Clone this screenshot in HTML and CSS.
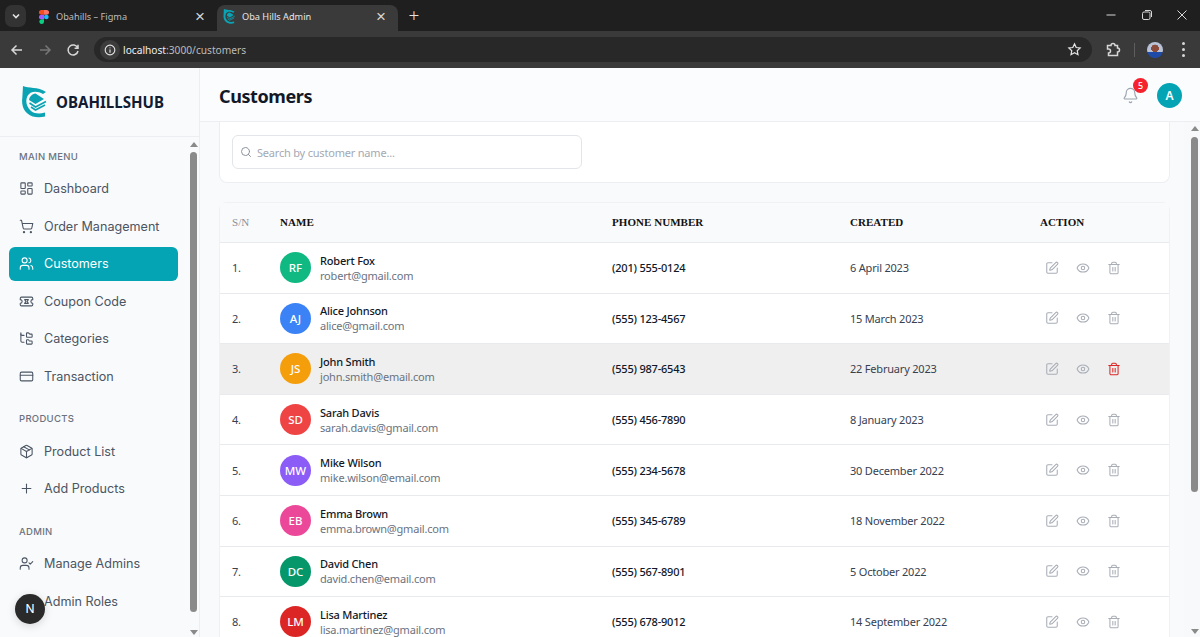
FILE: index.html
```html
<!DOCTYPE html>
<html lang="en">
<head>
<meta charset="utf-8">
<title>Oba Hills Admin</title>
<link rel="stylesheet" href="styles.css">
</head>
<body>
<svg class="defs" width="0" height="0" aria-hidden="true">
  <symbol id="i-dash" viewBox="0 0 24 24"><rect x="3" y="3" width="7" height="9" rx="1"/><rect x="14" y="3" width="7" height="5" rx="1"/><rect x="14" y="12" width="7" height="9" rx="1"/><rect x="3" y="16" width="7" height="5" rx="1"/></symbol>
  <symbol id="i-cart" viewBox="0 0 24 24"><circle cx="8" cy="21" r="1"/><circle cx="19" cy="21" r="1"/><path d="M2.05 2.05h2l2.66 12.42a2 2 0 0 0 2 1.58h9.78a2 2 0 0 0 1.95-1.57l1.65-7.43H5.12"/></symbol>
  <symbol id="i-users" viewBox="0 0 24 24"><path d="M16 21v-2a4 4 0 0 0-4-4H6a4 4 0 0 0-4 4v2"/><circle cx="9" cy="7" r="4"/><path d="M22 21v-2a4 4 0 0 0-3-3.87"/><path d="M16 3.13a4 4 0 0 1 0 7.75"/></symbol>
  <symbol id="i-ticket" viewBox="0 0 24 24"><path d="M2 9a3 3 0 0 1 0 6v2a2 2 0 0 0 2 2h16a2 2 0 0 0 2-2v-2a3 3 0 0 1 0-6V7a2 2 0 0 0-2-2H4a2 2 0 0 0-2 2Z"/><path d="M9 9h6l-2 3 2 3H9l2-3Z"/></symbol>
  <symbol id="i-tree" viewBox="0 0 24 24"><path d="M20 10a1 1 0 0 0 1-1V6a1 1 0 0 0-1-1h-2.5a1 1 0 0 1-.8-.4l-.9-1.2A1 1 0 0 0 15 3h-2a1 1 0 0 0-1 1v5a1 1 0 0 0 1 1Z"/><path d="M20 21a1 1 0 0 0 1-1v-3a1 1 0 0 0-1-1h-2.9a1 1 0 0 1-.88-.55l-.42-.85a1 1 0 0 0-.92-.6H13a1 1 0 0 0-1 1v5a1 1 0 0 0 1 1Z"/><path d="M3 5a2 2 0 0 0 2 2h3"/><path d="M3 3v13a2 2 0 0 0 2 2h3"/></symbol>
  <symbol id="i-card" viewBox="0 0 24 24"><rect x="2" y="5" width="20" height="14" rx="2"/><path d="M2 10h20"/></symbol>
  <symbol id="i-box" viewBox="0 0 24 24"><path d="M11 21.73a2 2 0 0 0 2 0l7-4A2 2 0 0 0 21 16V8a2 2 0 0 0-1-1.73l-7-4a2 2 0 0 0-2 0l-7 4A2 2 0 0 0 3 8v8a2 2 0 0 0 1 1.73z"/><path d="M12 22V12"/><path d="M3.29 7 12 12l8.71-5"/><path d="m7.5 4.27 9 5.15"/></symbol>
  <symbol id="i-plus" viewBox="0 0 24 24"><path d="M5 12h14"/><path d="M12 5v14"/></symbol>
  <symbol id="i-ucheck" viewBox="0 0 24 24"><path d="M16 21v-2a4 4 0 0 0-4-4H6a4 4 0 0 0-4 4v2"/><circle cx="9" cy="7" r="4"/><path d="m16 11 2 2 4-4"/></symbol>
  <symbol id="i-edit" viewBox="0 0 24 24"><path d="M12 3H5a2 2 0 0 0-2 2v14a2 2 0 0 0 2 2h14a2 2 0 0 0 2-2v-7"/><path d="M18.375 2.625a1 1 0 0 1 3 3l-9.013 9.014a2 2 0 0 1-.853.505l-2.873.84a.5.5 0 0 1-.62-.62l.84-2.873a2 2 0 0 1 .506-.852z"/></symbol>
  <symbol id="i-eye" viewBox="0 0 24 24"><path d="M2.062 12.348a1 1 0 0 1 0-.696 10.75 10.75 0 0 1 19.876 0 1 1 0 0 1 0 .696 10.75 10.75 0 0 1-19.876 0"/><circle cx="12" cy="12" r="3"/></symbol>
  <symbol id="i-trash" viewBox="0 0 24 24"><path d="M3 6h18"/><path d="M19 6v14c0 1-1 2-2 2H7c-1 0-2-1-2-2V6"/><path d="M8 6V4c0-1 1-2 2-2h4c1 0 2 1 2 2v2"/><path d="M10 11v6"/><path d="M14 11v6"/></symbol>
  <symbol id="i-bell" viewBox="0 0 24 24"><path d="M10.268 21a2 2 0 0 0 3.464 0"/><path d="M3.262 15.326A1 1 0 0 0 4 17h16a1 1 0 0 0 .74-1.673C19.41 13.956 18 12.499 18 8A6 6 0 0 0 6 8c0 4.499-1.411 5.956-2.738 7.326"/></symbol>
  <symbol id="i-search" viewBox="0 0 24 24"><path d="m21 21-4.34-4.34"/><circle cx="11" cy="11" r="8"/></symbol>
  <symbol id="i-logo" viewBox="0 0 26 32"><path class="logo-fill" d="M1 0C6 2.500 16 .5 24 6l-3 2C15 4.500 8 5 5.500 10 3 15 4.500 21 9 25c4 3 9 3 14 1.500v4C17 32 10 31.500 5.500 27.500 1 24-.5 18 .3 12Z"/><path class="logo-fill" d="M13.500 7.500 22 13l-8.500 5L7 14c.5-3.500 3-6 6.500-6.500Z"/><path class="logo-line" d="M7.500 17l6 4L24 15.500M9 21l4.500 3L23 19"/></symbol>
</svg>

<header class="browser">
  <div class="tabstrip">
    <span class="tab-menu"><svg viewBox="0 0 10 10" class="chev"><path d="M2 3.500 5 6.500 8 3.500"/></svg></span>
    <div class="tab">
      <svg class="fav" viewBox="0 0 12 18"><path fill="#f24e1e" d="M2.500 0H6v6H2.500a3 3 0 0 1 0-6Z"/><path fill="#ff7262" d="M6 0h3.500a3 3 0 0 1 0 6H6Z"/><path fill="#a259ff" d="M2.500 6H6v6H2.500a3 3 0 0 1 0-6Z"/><circle fill="#1abcfe" cx="9" cy="9" r="3"/><path fill="#0acf83" d="M2.500 12H6v3a3 3 0 1 1-3.500-3Z"/></svg>
      <span class="tab-title">Obahills – Figma</span>
      <span class="tab-x">×</span>
    </div>
    <div class="tab tab-active">
      <svg class="fav fav-logo"><use href="#i-logo"/></svg>
      <span class="tab-title">Oba Hills Admin</span>
      <span class="tab-x">×</span>
    </div>
    <span class="tab-new">+</span>
    <div class="win-btns">
      <svg viewBox="0 0 12 12" class="win"><path d="M1.500 6h9"/></svg>
      <svg viewBox="0 0 12 12" class="win"><rect x="1.500" y="3" width="7.500" height="7.500" rx="1.500"/><path d="M4 1.500h5a1.500 1.500 0 0 1 1.500 1.500v5"/></svg>
      <svg viewBox="0 0 12 12" class="win"><path d="M1.500 1.500l9 9M10.500 1.500l-9 9"/></svg>
    </div>
  </div>
  <div class="toolbar">
    <svg class="tool" viewBox="0 0 16 16"><path d="M13 8H3M7.500 3.500 3 8l4.500 4.500"/></svg>
    <svg class="tool tool-off" viewBox="0 0 16 16"><path d="M3 8h10M8.500 3.500 13 8l-4.500 4.500"/></svg>
    <svg class="tool" viewBox="0 0 16 16"><path d="M12.700 6A5 5 0 1 0 13 9M13 2.800V6.200H9.600"/></svg>
    <div class="omnibox">
      <span class="info"><svg viewBox="0 0 16 16" class="info-i"><circle cx="8" cy="8" r="5.500"/><path d="M8 7.500v3.500M8 5v1"/></svg></span>
      <span class="url">localhost<span class="url-dim">:3000/customers</span></span>
      <svg class="star" viewBox="0 0 16 16"><path d="m8 2 1.800 3.900 4.200.5-3.100 2.900.8 4.200L8 11.400l-3.700 2.100.8-4.200L2 6.400l4.200-.5Z"/></svg>
    </div>
    <svg class="tool ext" viewBox="0 0 16 16"><path d="M2.500 3.500H6a2 2 0 0 1 4 0h2.500V6a2 2 0 0 1 0 4v3.500H3.500V11a2 2 0 0 0 0-4h-1Z"/></svg>
    <span class="tool-sep"></span>
    <span class="profile"><span class="profile-face"></span></span>
    <span class="kebab"><i></i><i></i><i></i></span>
  </div>
</header>

<div class="app">
  <aside class="sidebar">
    <div class="brand">
      <svg class="brand-mark"><use href="#i-logo"/></svg>
      <span class="brand-name">OBAHILLSHUB</span>
    </div>
    <div class="side-body">
      <nav class="side-nav">
        <section class="nav-group">
          <h2 class="nav-label">Main Menu</h2>
          <a class="nav-item"><svg class="nav-ic"><use href="#i-dash"/></svg>Dashboard</a>
          <a class="nav-item"><svg class="nav-ic"><use href="#i-cart"/></svg>Order Management</a>
          <a class="nav-item nav-active"><svg class="nav-ic"><use href="#i-users"/></svg>Customers</a>
          <a class="nav-item"><svg class="nav-ic"><use href="#i-ticket"/></svg>Coupon Code</a>
          <a class="nav-item"><svg class="nav-ic"><use href="#i-tree"/></svg>Categories</a>
          <a class="nav-item"><svg class="nav-ic"><use href="#i-card"/></svg>Transaction</a>
        </section>
        <section class="nav-group">
          <h2 class="nav-label">Products</h2>
          <a class="nav-item"><svg class="nav-ic"><use href="#i-box"/></svg>Product List</a>
          <a class="nav-item"><svg class="nav-ic"><use href="#i-plus"/></svg>Add Products</a>
        </section>
        <section class="nav-group">
          <h2 class="nav-label">Admin</h2>
          <a class="nav-item"><svg class="nav-ic"><use href="#i-ucheck"/></svg>Manage Admins</a>
          <a class="nav-item"><svg class="nav-ic"><use href="#i-ucheck"/></svg>Admin Roles</a>
        </section>
      </nav>
      <div class="sbar sbar-side"><span class="sbar-up"></span><span class="sbar-thumb"></span><span class="sbar-down"></span></div>
    </div>
  </aside>

  <main class="main">
    <div class="topbar">
      <h1 class="page-title">Customers</h1>
      <div class="top-actions">
        <span class="bell"><svg class="bell-ic"><use href="#i-bell"/></svg><b class="badge">5</b></span>
        <span class="me">A</span>
      </div>
    </div>
    <div class="main-body">
      <div class="content">
        <div class="search-card">
          <div class="search-box"><svg class="search-ic"><use href="#i-search"/></svg><span class="search-ph">Search by customer name...</span></div>
        </div>
        <div class="table-card">
          <div class="row row-head">
            <div class="th th-muted">S/N</div><div class="th">NAME</div><div class="th">PHONE NUMBER</div><div class="th">CREATED</div><div class="th">ACTION</div>
          </div>
          <div class="row">
            <div class="sn">1.</div>
            <div class="who"><span class="av av-green">RF</span><span class="who-t"><b>Robert Fox</b><small>robert@gmail.com</small></span></div>
            <div class="phone">(201) 555-0124</div><div class="date">6 April 2023</div>
            <div class="acts"><svg class="act"><use href="#i-edit"/></svg><svg class="act"><use href="#i-eye"/></svg><svg class="act"><use href="#i-trash"/></svg></div>
          </div>
          <div class="row">
            <div class="sn">2.</div>
            <div class="who"><span class="av av-blue">AJ</span><span class="who-t"><b>Alice Johnson</b><small>alice@gmail.com</small></span></div>
            <div class="phone">(555) 123-4567</div><div class="date">15 March 2023</div>
            <div class="acts"><svg class="act"><use href="#i-edit"/></svg><svg class="act"><use href="#i-eye"/></svg><svg class="act"><use href="#i-trash"/></svg></div>
          </div>
          <div class="row row-hover">
            <div class="sn">3.</div>
            <div class="who"><span class="av av-amber">JS</span><span class="who-t"><b>John Smith</b><small>john.smith@email.com</small></span></div>
            <div class="phone">(555) 987-6543</div><div class="date">22 February 2023</div>
            <div class="acts"><svg class="act"><use href="#i-edit"/></svg><svg class="act"><use href="#i-eye"/></svg><svg class="act act-danger"><use href="#i-trash"/></svg></div>
          </div>
          <div class="row">
            <div class="sn">4.</div>
            <div class="who"><span class="av av-red">SD</span><span class="who-t"><b>Sarah Davis</b><small>sarah.davis@gmail.com</small></span></div>
            <div class="phone">(555) 456-7890</div><div class="date">8 January 2023</div>
            <div class="acts"><svg class="act"><use href="#i-edit"/></svg><svg class="act"><use href="#i-eye"/></svg><svg class="act"><use href="#i-trash"/></svg></div>
          </div>
          <div class="row">
            <div class="sn">5.</div>
            <div class="who"><span class="av av-violet">MW</span><span class="who-t"><b>Mike Wilson</b><small>mike.wilson@email.com</small></span></div>
            <div class="phone">(555) 234-5678</div><div class="date">30 December 2022</div>
            <div class="acts"><svg class="act"><use href="#i-edit"/></svg><svg class="act"><use href="#i-eye"/></svg><svg class="act"><use href="#i-trash"/></svg></div>
          </div>
          <div class="row">
            <div class="sn">6.</div>
            <div class="who"><span class="av av-pink">EB</span><span class="who-t"><b>Emma Brown</b><small>emma.brown@gmail.com</small></span></div>
            <div class="phone">(555) 345-6789</div><div class="date">18 November 2022</div>
            <div class="acts"><svg class="act"><use href="#i-edit"/></svg><svg class="act"><use href="#i-eye"/></svg><svg class="act"><use href="#i-trash"/></svg></div>
          </div>
          <div class="row">
            <div class="sn">7.</div>
            <div class="who"><span class="av av-emerald">DC</span><span class="who-t"><b>David Chen</b><small>david.chen@email.com</small></span></div>
            <div class="phone">(555) 567-8901</div><div class="date">5 October 2022</div>
            <div class="acts"><svg class="act"><use href="#i-edit"/></svg><svg class="act"><use href="#i-eye"/></svg><svg class="act"><use href="#i-trash"/></svg></div>
          </div>
          <div class="row">
            <div class="sn">8.</div>
            <div class="who"><span class="av av-crimson">LM</span><span class="who-t"><b>Lisa Martinez</b><small>lisa.martinez@gmail.com</small></span></div>
            <div class="phone">(555) 678-9012</div><div class="date">14 September 2022</div>
            <div class="acts"><svg class="act"><use href="#i-edit"/></svg><svg class="act"><use href="#i-eye"/></svg><svg class="act"><use href="#i-trash"/></svg></div>
          </div>
        </div>
      </div>
      <div class="sbar sbar-main"><span class="sbar-up"></span><span class="sbar-thumb"></span><span class="sbar-down"></span></div>
    </div>
  </main>
</div>
<span class="next-badge">N</span>
</body>
</html>
```

FILE: styles.css
```css
* { box-sizing: border-box; }
html, body { margin: 0; height: 637px; overflow: hidden; }
body { display: flex; flex-direction: column; font-family: "Noto Sans", sans-serif; background: #f9fafb; color: #111827; }
.defs { position: absolute; }
h1, h2 { margin: 0; }

/* Browser chrome */
.browser { height: 68px; flex: none; background: #1f1f1f; color: #e3e3e3; }
.tabstrip { height: 31px; display: flex; align-items: flex-end; padding-left: 5px; }
.tab-menu { width: 21px; height: 22px; margin-bottom: 4px; border-radius: 7px; background: #333; display: flex; align-items: center; justify-content: center; }
.chev { width: 10px; height: 10px; fill: none; stroke: #e3e3e3; stroke-width: 1.6; }
.tab { width: 191px; height: 26px; display: flex; align-items: center; padding: 0 12px 3px 13px; font-size: 9.200px; color: #bdbdbd; }
.tab-active { width: 181px; background: #3a3a3a; border-radius: 8px 8px 0 0; color: #e6e6e6; padding-left: 6px; }
.fav { width: 10px; height: 14px; margin-right: 7px; flex: none; }
.fav-logo { width: 13px; height: 15px; margin-right: 6px; }
.tab-title { flex: 1; white-space: nowrap; }
.tab-x { font-size: 17px; line-height: 1; color: #d5d5d5; font-family: "Liberation Sans", sans-serif; }
.tab-new { width: 32px; text-align: center; font-size: 19px; line-height: 26px; font-weight: 300; color: #e3e3e3; margin-bottom: 3px; }
.win-btns { margin-left: auto; align-self: flex-start; display: flex; gap: 23.500px; padding: 9px 12px 0 0; }
.win { width: 12px; height: 12px; fill: none; stroke: #d8d8d8; stroke-width: 1; }
.toolbar { height: 37px; background: #3a3a3a; display: flex; align-items: center; padding: 0 0 0 9px; }
.tool { width: 16px; height: 16px; fill: none; stroke: #d7d7d7; stroke-width: 1.500; margin-right: 12px; flex: none; }
.tool-off { stroke: #767676; }
.omnibox { height: 25px; width: 998px; margin-left: 1px; background: #282828; border-radius: 13px; display: flex; align-items: center; padding: 0 10px 0 6px; }
.info { width: 20px; height: 20px; border-radius: 50%; background: #3c3c3c; display: flex; align-items: center; justify-content: center; }
.info-i { width: 14px; height: 14px; fill: none; stroke: #e3e3e3; stroke-width: 1.300; }
.url { margin-left: 3px; font-size: 10.200px; color: #f0f0f0; flex: 1; }
.url-dim { color: #bcbcbc; }
.star { width: 15px; height: 15px; fill: none; stroke: #e3e3e3; stroke-width: 1.300; }
.ext { margin: 0 0 0 13px; }
.tool-sep { width: 1px; height: 14px; background: #5e5e5e; margin: 0 12px 0 13px; }
.profile { width: 16px; height: 16px; border-radius: 50%; background: #8fa3c4; overflow: hidden; display: block; }
.profile-face { display: block; width: 16px; height: 16px; background: radial-gradient(circle at 50% 40%, #8a4b3a 0 30%, transparent 32%), linear-gradient(#b9c2d6 60%, #1e4aa8 60%); }
.kebab { display: flex; flex-direction: column; gap: 3px; margin-left: 19px; }
.kebab i { width: 3px; height: 3px; border-radius: 50%; background: #d7d7d7; }

/* App frame */
.app { flex: 1; display: flex; min-height: 0; }
.sidebar { width: 200px; flex: none; border-right: 1px solid #eceef1; background: #f9fafb; display: flex; flex-direction: column; font-family: Inter, sans-serif; }
.brand { height: 69px; flex: none; display: flex; align-items: center; padding: 0 0 1px 22px; border-bottom: 1px solid #eceef1; }
.brand-mark { width: 26px; height: 32px; flex: none; }
.logo-fill { fill: #0aa3b3; }
.logo-line { fill: none; stroke: #0aa3b3; stroke-width: 1.600; }
.fav-logo .logo-line { stroke-width: 1.800; }
.brand-name { margin-left: 8px; font-family: "Noto Sans", sans-serif; font-weight: 700; font-size: 15.100px; color: #111c33; }
.side-body { flex: 1; display: flex; min-height: 0; }
.side-nav { flex: 1; padding: 11.500px 10px 0 9px; display: flex; flex-direction: column; gap: 18px; min-width: 0; }
.nav-group { display: flex; flex-direction: column; gap: 3.500px; }
.nav-label { font-size: 9.500px; line-height: 16px; font-weight: 500; letter-spacing: .3px; color: #6b7280; text-transform: uppercase; padding-left: 10px; margin-bottom: 3.500px; }
.nav-item { height: 34px; display: flex; align-items: center; gap: 10px; padding-left: 10px; font-size: 12.600px; color: #4b5563; border-radius: 6px; white-space: nowrap; }
.nav-active { background: #04a4b4; color: #fff; }
.nav-ic { width: 15px; height: 15px; fill: none; stroke: currentColor; stroke-width: 1.700; stroke-linecap: round; stroke-linejoin: round; flex: none; }

/* Fake scrollbars */
.sbar { flex: none; display: flex; flex-direction: column; align-items: center; }
.sbar-side { width: 11px; padding: 5px 0 2px; }
.sbar-main { width: 16px; padding: 4px 0 3px 5px; background: #f8f9fa; }
.sbar-up, .sbar-down { width: 0; height: 0; border-left: 4px solid transparent; border-right: 4px solid transparent; flex: none; }
.sbar-up { border-bottom: 5px solid #8a8a8a; }
.sbar-down { border-top: 5px solid #8a8a8a; margin-top: auto; }
.sbar-thumb { width: 7px; background: #8a8a8a; border-radius: 4px; }
.sbar-side .sbar-thumb { flex: 1; margin: 5px 0 18px; }
.sbar-main .sbar-thumb { height: 355px; margin-top: 6px; }

/* Main */
.main { flex: 1; min-width: 0; display: flex; flex-direction: column; }
.topbar { height: 54px; flex: none; display: flex; align-items: center; justify-content: space-between; padding: 1px 18px 0 19px; background: #fbfcfd; border-bottom: 1px solid #eceef1; }
.page-title { font-size: 18px; font-weight: 700; letter-spacing: -.4px; color: #111827; padding-top: 2px; }
.top-actions { display: flex; align-items: center; gap: 18px; }
.bell { position: relative; display: block; width: 17px; height: 17px; }
.bell-ic { width: 17px; height: 17px; fill: none; stroke: #9ca3af; stroke-width: 1.600; stroke-linecap: round; stroke-linejoin: round; display: block; }
.badge { position: absolute; top: -9px; right: -9px; width: 15px; height: 15px; border-radius: 50%; background: #f5222d; color: #fff; font-size: 9px; font-weight: 500; line-height: 15px; text-align: center; }
.me { width: 25px; height: 25px; border-radius: 50%; background: #04a4b4; color: #fff; font-size: 12px; font-weight: 600; line-height: 25px; text-align: center; }
.main-body { flex: 1; min-height: 0; display: flex; overflow: hidden; }
.content { flex: 1; min-width: 0; padding: 0 14px 0 19px; display: flex; flex-direction: column; gap: 19px; }
.search-card { height: 61px; flex: none; background: #fff; border: 1px solid #eceef1; border-top: 0; border-radius: 0 0 8px 8px; padding: 13px 12px; }
.search-box { width: 350px; height: 34px; background: #fff; border: 1px solid #e2e5e9; border-radius: 6px; display: flex; align-items: center; padding-left: 7px; gap: 5px; }
.search-ic { width: 12px; height: 12px; fill: none; stroke: #8b93a0; stroke-width: 2; stroke-linecap: round; flex: none; }
.search-ph { font-size: 11px; letter-spacing: -.2px; color: #a3a9b4; }
.table-card { flex: none; background: #fff; border: 1px solid #f0f1f3; border-bottom: 0; border-radius: 8px 8px 0 0; }
.row { display: grid; grid-template-columns: 47px 332px 238px 190px 1fr; align-items: center; height: 50.600px; border-bottom: 1px solid #e8eaed; padding-left: 12px; font-size: 11px; letter-spacing: -.2px; }
.row-head { height: 40px; background: #f9fafb; letter-spacing: 0; }
.row-hover { background: #efefef; }
.th { font-family: "Liberation Serif", serif; font-weight: 700; font-size: 11px; letter-spacing: .05px; color: #111; padding: 0 0 2px 1px; }
.th-muted { color: #8a8f98; font-weight: 400; padding-left: 0; }
.sn { color: #374151; }
.who { display: flex; align-items: center; gap: 9px; padding-left: 1px; }
.av { width: 31px; height: 31px; flex: none; border-radius: 50%; color: #fff; font-size: 11.500px; font-weight: 500; text-align: center; line-height: 31px; letter-spacing: 0; }
.av-green { background: #10b981; }
.av-blue { background: #3b82f6; }
.av-amber { background: #f59e0b; }
.av-red { background: #ef4444; }
.av-violet { background: #8b5cf6; }
.av-pink { background: #ec4899; }
.av-emerald { background: #059669; }
.av-crimson { background: #dc2626; }
.who-t { display: flex; flex-direction: column; }
.who-t b { font-weight: 500; font-size: 11px; line-height: 15px; color: #111827; }
.who-t small { font-size: 11px; line-height: 15px; color: #6b7280; }
.phone { font-weight: 500; color: #111827; padding-left: 1px; }
.date { color: #374151; padding-left: 1px; letter-spacing: -.2px; }
.acts { display: flex; gap: 17px; padding-left: 6px; }
.act { width: 14px; height: 14px; fill: none; stroke: #a8adb6; stroke-width: 1.800; stroke-linecap: round; stroke-linejoin: round; }
.act-danger { stroke: #dc2626; }

/* Dev indicator overlay */
.next-badge { position: absolute; left: 15px; top: 594px; width: 30px; height: 30px; border-radius: 50%; background: #2a2a2a; color: #fff; font-size: 12px; font-weight: 400; line-height: 30px; text-align: center; box-shadow: 0 2px 8px rgba(0,0,0,.15); font-family: Inter, sans-serif; }
```
